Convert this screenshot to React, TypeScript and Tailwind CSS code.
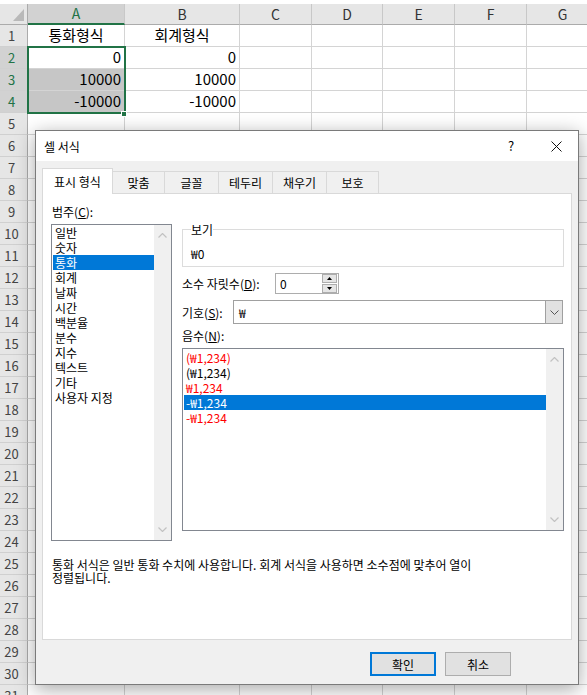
import React from "react";

type Col = { label: string; width: string };

// spreadsheet columns (widths read off the screenshot)
const columns: Col[] = [
  { label: "A", width: "w-[97px]" },
  { label: "B", width: "w-[115px]" },
  { label: "C", width: "w-[72px]" },
  { label: "D", width: "w-[71px]" },
  { label: "E", width: "w-[72px]" },
  { label: "F", width: "w-[72px]" },
  { label: "G", width: "w-[72px]" },
];

const cellValues: Record<number, string[]> = {
  1: ["통화형식", "회계형식"],
  2: ["0", "0"],
  3: ["10000", "10000"],
  4: ["-10000", "-10000"],
};

const selectedRows = [2, 3, 4];

const categories = [
  "일반",
  "숫자",
  "통화",
  "회계",
  "날짜",
  "시간",
  "백분율",
  "분수",
  "지수",
  "텍스트",
  "기타",
  "사용자 지정",
];

const negatives = [
  { text: "(₩1,234)", red: true },
  { text: "(₩1,234)", red: false },
  { text: "₩1,234", red: true },
  { text: "-₩1,234", red: false, selected: true },
  { text: "-₩1,234", red: true },
];

const tabs = [
  { label: "표시 형식", width: "w-[71px]" },
  { label: "맞춤", width: "w-[52px]" },
  { label: "글꼴", width: "w-[54px]" },
  { label: "테두리", width: "w-[54px]" },
  { label: "채우기", width: "w-[54px]" },
  { label: "보호", width: "w-[52px]" },
];

const Chevron = ({ up }: { up?: boolean }) => (
  <svg width="9" height="5" viewBox="0 0 9 5">
    <path
      d={up ? "M0.5 4.5 L4.5 0.5 L8.5 4.5" : "M0.5 0.5 L4.5 4.5 L8.5 0.5"}
      fill="none"
      stroke="#c2c2c2"
      strokeWidth="1.2"
    />
  </svg>
);

// disabled vertical scrollbar inside list boxes
const Scrollbar = () => (
  <div className="w-[17px] shrink-0 bg-[#f0f0f0] flex flex-col items-center justify-between py-[8px]">
    <Chevron up />
    <Chevron />
  </div>
);

const Sheet = () => (
  <div className="relative">
    <div className="h-[4px] bg-white" />

    {/* Column headers */}
    <div className="flex h-[21px]">
      <div className="w-[28px] shrink-0 bg-[#e6e6e6] border-r border-b border-[#ababab] flex items-end justify-end pr-[3px] pb-[3px]">
        <svg width="11" height="12" viewBox="0 0 11 12">
          <path d="M11 0 L11 12 L0 12 Z" fill="#b9b9b9" />
        </svg>
      </div>
      {columns.map((col, i) => (
        <div
          key={col.label}
          className={`${col.width} shrink-0 flex items-center justify-center text-[14px] border-r border-r-[#c8c8c8] ${
            i === 0
              ? "bg-[#d2d2d2] text-[#217346] border-b-2 border-b-[#217346]"
              : "bg-[#e6e6e6] text-[#333] border-b border-b-[#ababab]"
          }`}
        >
          {col.label}
        </div>
      ))}
    </div>

    {/* Rows */}
    {Array.from({ length: 31 }, (_, i) => i + 1).map((r) => {
      const sel = selectedRows.includes(r);
      const vals = cellValues[r];
      return (
        <div key={r} className="flex h-[22px]">
          <div
            className={`w-[28px] shrink-0 flex items-center justify-center pr-[4px] text-[13px] border-r border-b border-r-[#ababab] border-b-[#d0d0d0] ${
              sel ? "bg-[#d2d2d2] text-[#217346]" : "bg-[#e6e6e6] text-[#444]"
            }`}
          >
            {r}
          </div>
          {columns.map((col, ci) => {
            const filled = ci === 0 && (r === 3 || r === 4);
            return (
              <div
                key={col.label}
                className={`${col.width} shrink-0 border-r border-b border-[#d4d4d4] flex items-center text-[15px] text-black ${
                  r === 1 ? "justify-center" : "justify-end pr-[3px]"
                } ${filled ? "bg-[#c6c6c6]" : "bg-white"}`}
              >
                {vals?.[ci]}
              </div>
            );
          })}
        </div>
      );
    })}

    {/* Selection A2:A4 */}
    <div className="absolute left-[27px] top-[46px] w-[99px] h-[68px] border-2 border-[#217346]" />
    <div className="absolute left-[121px] top-[111px] w-[6px] h-[6px] bg-[#217346] border border-white" />
  </div>
);

const FormatDialog = () => (
  <div className="absolute left-[35px] top-[130px] w-[544px] h-[555px] border border-[#7a7a7a] bg-[#f0f0f0] shadow-[0_4px_18px_rgba(0,0,0,0.35)] flex flex-col text-[12px] text-black">
    {/* Title bar */}
    <div className="h-[30px] bg-white flex items-center shrink-0">
      <span className="pl-[8px] leading-[15px]">셀 서식</span>
      <span className="ml-auto w-[46px] text-center text-[13px]">?</span>
      <span className="w-[44px] flex justify-center">
        <svg width="11" height="11" viewBox="0 0 11 11">
          <path d="M0.5 0.5 L10.5 10.5 M10.5 0.5 L0.5 10.5" stroke="#111" strokeWidth="1" />
        </svg>
      </span>
    </div>

    <div className="px-[6px]">
      {/* Tabs */}
      <div className="flex items-end h-[25px] mt-[7px]">
        {tabs.map((t, i) =>
          i === 0 ? (
            <div
              key={t.label}
              className={`${t.width} h-[26px] -mb-px relative z-10 bg-white border-l border-t border-r border-[#d9d9d9] flex items-center justify-center leading-[15px]`}
            >
              {t.label}
            </div>
          ) : (
            <div
              key={t.label}
              className={`${t.width} h-[22px] border-t border-r border-[#d9d9d9] flex items-center justify-center leading-[15px]`}
            >
              {t.label}
            </div>
          )
        )}
      </div>

      {/* Panel */}
      <div className="h-[447px] bg-white border border-[#d9d9d9] flex flex-col">
        <div className="flex">
          {/* Category */}
          <div className="ml-[8px] w-[121px] pt-[10px]">
            <div className="leading-[15px] pl-[1px]">
              범주(<u>C</u>):
            </div>
            <div className="mt-[5px] h-[317px] border border-[#828790] flex">
              <div className="flex-1 pl-[1px]">
                {categories.map((c) => (
                  <div
                    key={c}
                    className={`h-[15px] leading-[15px] pl-[2px] ${
                      c === "통화" ? "bg-[#0078d7] text-white" : ""
                    }`}
                  >
                    {c}
                  </div>
                ))}
              </div>
              <Scrollbar />
            </div>
          </div>

          {/* Right side */}
          <div className="ml-[10px] w-[382px] pt-[28px]">
            <fieldset className="h-[45px] border border-[#dcdcdc] px-[8px]">
              <legend className="leading-[15px] px-0">보기</legend>
              <div className="pt-[9px] leading-[15px]">₩0</div>
            </fieldset>

            <div className="flex items-center mt-[6px] h-[21px]">
              <span className="w-[93px] leading-[15px]">
                소수 자릿수(<u>D</u>):
              </span>
              <div className="w-[64px] h-[21px] border border-[#adadad] flex items-center">
                <span className="flex-1 pl-[4px] leading-[15px]">0</span>
                <div className="w-[15px] h-[19px] flex flex-col mr-px">
                  <div className="h-[9px] bg-[#e5e5e5] border border-[#adadad] flex items-center justify-center">
                    <svg width="5" height="3" viewBox="0 0 5 3">
                      <path d="M0 3 L2.5 0 L5 3 Z" fill="#000" />
                    </svg>
                  </div>
                  <div className="h-[9px] mt-px bg-[#e5e5e5] border border-[#adadad] flex items-center justify-center">
                    <svg width="5" height="3" viewBox="0 0 5 3">
                      <path d="M0 0 L5 0 L2.5 3 Z" fill="#000" />
                    </svg>
                  </div>
                </div>
              </div>
            </div>

            <div className="flex items-center mt-[6px] h-[24px]">
              <span className="w-[51px] leading-[15px]">
                기호(<u>S</u>):
              </span>
              <div className="w-[330px] h-[24px] border border-[#a0a0a0] flex">
                <span className="flex-1 pl-[5px] flex items-center leading-[15px]">₩</span>
                <div className="w-[17px] bg-[#e1e1e1] border-l border-[#a0a0a0] flex items-center justify-center">
                  <svg width="9" height="5" viewBox="0 0 9 5">
                    <path d="M0.5 0.5 L4.5 4.5 L8.5 0.5" fill="none" stroke="#555" strokeWidth="1" />
                  </svg>
                </div>
              </div>
            </div>

            <div className="mt-[4px] leading-[15px]">
              음수(<u>N</u>):
            </div>
            <div className="mt-[5px] h-[183px] border border-[#828790] flex">
              <div className="flex-1 pl-[1px] pt-[1px]">
                {negatives.map((n, i) => (
                  <div
                    key={i}
                    className={`h-[15px] leading-[15px] pl-[2px] ${
                      n.selected ? "bg-[#0078d7] text-white" : n.red ? "text-[#ff0000]" : ""
                    }`}
                  >
                    {n.text}
                  </div>
                ))}
              </div>
              <Scrollbar />
            </div>
          </div>
        </div>

        <p className="ml-[9px] mt-[17px] leading-[13px]">
          통화 서식은 일반 통화 수치에 사용합니다. 회계 서식을 사용하면 소수점에 맞추어 열이
          <br />
          정렬됩니다.
        </p>
      </div>

      {/* Buttons */}
      <div className="flex justify-end gap-[9px] pr-[61px] mt-[12px]">
        <button className="w-[66px] h-[24px] bg-[#e1e1e1] border-2 border-[#0078d7] leading-[15px]">
          확인
        </button>
        <button className="w-[66px] h-[24px] bg-[#e1e1e1] border border-[#adadad] leading-[15px]">
          취소
        </button>
      </div>
    </div>
  </div>
);

export default function App() {
  return (
    <div className="relative w-[587px] h-[695px] overflow-hidden bg-white font-['Noto_Sans_CJK_KR',sans-serif]">
      <Sheet />
      <FormatDialog />
    </div>
  );
}
